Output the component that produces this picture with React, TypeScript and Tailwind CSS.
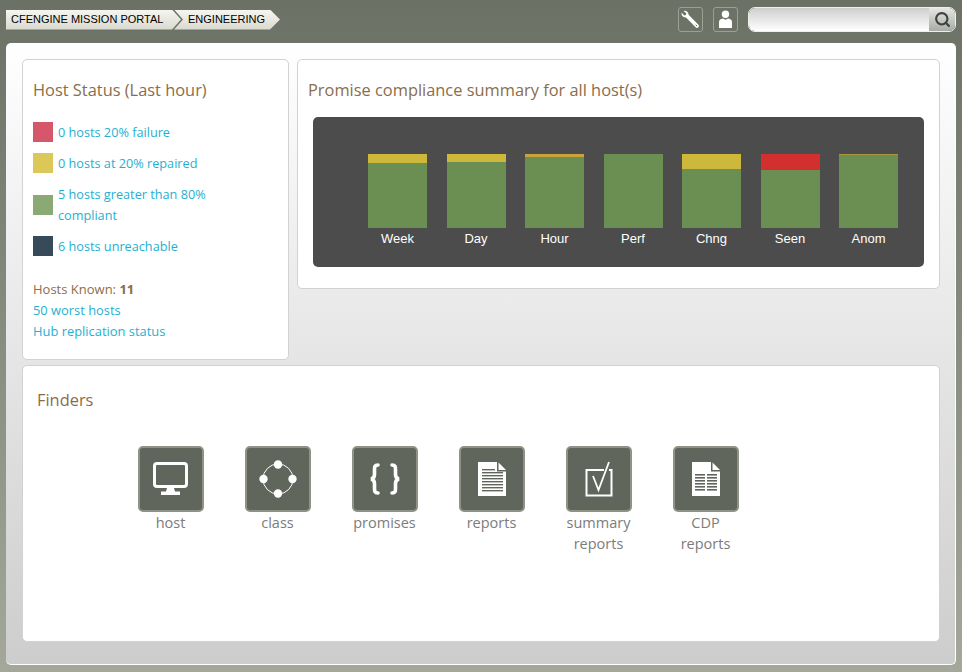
import type { JSX, ReactNode } from 'react'
import { Search } from 'lucide-react'

const LINK = 'text-[#1fb0d0] leading-[21px]'

const LEGEND = [
  { color: 'bg-[#d6566c]', label: '0 hosts 20% failure' },
  { color: 'bg-[#dcc858]', label: '0 hosts at 20% repaired' },
  { color: 'bg-[#8aa974]', label: '5 hosts greater than 80% compliant' },
  { color: 'bg-[#364a5a]', label: '6 hosts unreachable' }
]

// heights are px out of the 74px bar
const BARS = [
  { label: 'Week', top: 'bg-[#cdb83c]', topH: 9 },
  { label: 'Day', top: 'bg-[#cdb83c]', topH: 8 },
  { label: 'Hour', top: 'bg-[#c9a23c]', topH: 3 },
  { label: 'Perf', top: 'bg-[#cdb83c]', topH: 0 },
  { label: 'Chng', top: 'bg-[#cdb83c]', topH: 15 },
  { label: 'Seen', top: 'bg-[#d32f2f]', topH: 16 },
  { label: 'Anom', top: 'bg-[#a8953c]', topH: 1 }
]

function Card({ className, children }: { className: string; children: ReactNode }): JSX.Element {
  return <section className={`rounded-[5px] border border-[#d2d2d2] bg-white ${className}`}>{children}</section>
}

function Breadcrumbs(): JSX.Element {
  return (
    <div className="flex items-center font-['Liberation_Sans',Arial,sans-serif] text-[11px] text-black">
      <span className="z-10 flex h-5 w-[175px] items-center bg-gradient-to-b from-[#f6f6f0] to-[#d9d9d0] pl-[5px] [clip-path:polygon(0_0,166px_0,175px_50%,166px_100%,0_100%)]">
        CFENGINE MISSION PORTAL
      </span>
      <span className="-ml-[7px] flex h-5 w-[106px] items-center bg-gradient-to-b from-[#f6f6f0] to-[#d9d9d0] pl-[14px] [clip-path:polygon(0_0,96px_0,106px_50%,96px_100%,0_100%,9px_50%)]">
        ENGINEERING
      </span>
    </div>
  )
}

function ToolButton({ children }: { children: ReactNode }): JSX.Element {
  return (
    <div className="flex h-[25px] w-[25px] items-center justify-center rounded-[3px] border border-[#9aa093]">
      {children}
    </div>
  )
}

function Header(): JSX.Element {
  return (
    <header className="flex h-[43px] items-center justify-between pl-[6px] pr-[6px] pb-[5px] pt-[1px]">
      <Breadcrumbs />
      <div className="flex items-center">
        <ToolButton>
          <svg width="19" height="19" viewBox="0 0 19 19" fill="white">
            <path d="M2.4 .8 L5.4 3.4 L4.8 5 L3.2 5.4 L.6 2.6 C.1 5.4 2 7.6 5 7.4 L14.6 17.2 C15.6 18.2 16.7 18 17.4 17.2 C18.1 16.4 18.2 15.4 17.2 14.4 L7.6 4.8 C7.6 2 5.4 .2 2.4 .8 Z" />
            <path d="M14.8 14.8 L16 16" stroke="#6b7265" strokeWidth="1" />
          </svg>
        </ToolButton>
        <div className="ml-[10px]">
          <ToolButton>
            <svg width="15" height="19" viewBox="0 0 15 19" fill="white">
              <circle cx="7.5" cy="4.2" r="3.7" />
              <path d="M1 18 V12 C1 9.8 2.8 9 4.8 8.6 L7.5 9.8 L10.2 8.6 C12.2 9 14 9.8 14 12 V18 Z" />
            </svg>
          </ToolButton>
        </div>
        <div className="ml-[10px] flex h-[25px] w-[208px] overflow-hidden rounded-[7px] border border-[#eeeeea]">
          <div className="flex-1 bg-gradient-to-b from-[#cfcfcf] to-white" />
          <div className="flex w-[26px] items-center justify-center bg-gradient-to-b from-[#e6e6e4] to-[#a9aca6]">
            <Search size={17} strokeWidth={3} className="text-[#3c423c]" />
          </div>
        </div>
      </div>
    </header>
  )
}

function HostStatus(): JSX.Element {
  return (
    <Card className="h-[301px] w-[267px] shrink-0 px-[10px] pt-[19px]">
      <h2 className="text-[16.4px] leading-[22px] text-[#8b6d4b]">Host Status (Last hour)</h2>
      <ul className="mt-[21px] flex flex-col gap-[10px]">
        {LEGEND.map((item) => (
          <li key={item.label} className="flex items-center gap-[5px]">
            <span className={`mb-[1px] h-5 w-5 shrink-0 ${item.color}`} />
            <a className={`w-[170px] ${LINK}`}>{item.label}</a>
          </li>
        ))}
      </ul>
      <div className="mt-[22px] flex flex-col text-[12.9px]">
        <span className="text-[13px] leading-[21px] text-[#8b6d4b]">
          Hosts Known: <b>11</b>
        </span>
        <a className={LINK}>50 worst hosts</a>
        <a className={LINK}>Hub replication status</a>
      </div>
    </Card>
  )
}

function Compliance(): JSX.Element {
  return (
    <Card className="h-[230px] flex-1 px-[15px] pt-[19px]">
      <h2 className="-ml-[5px] text-[16.4px] leading-[22px] text-[#8b6d4b]">Promise compliance summary for all host(s)</h2>
      <div className="mt-[16px] flex h-[150px] justify-between rounded-[5px] bg-[#4c4c4c] pl-[55px] pr-[26px] pt-[37px]">
        {BARS.map((bar) => (
          <div key={bar.label} className="flex w-[59px] flex-col items-center">
            <div className="flex h-[74px] w-full flex-col bg-[#6b8f52]">
              <div className={bar.top} style={{ height: bar.topH }} />
            </div>
            <span className="mt-[3px] font-['Liberation_Sans',Arial,sans-serif] text-[13px] leading-[16px] text-white">
              {bar.label}
            </span>
          </div>
        ))}
      </div>
    </Card>
  )
}

function Doc({ lines }: { lines: ReactNode }): JSX.Element {
  return (
    <svg width="28" height="34" viewBox="0 0 28 34">
      <path d="M0 0 H19 V9.5 H28 V34 H0 Z" fill="white" />
      <path d="M20.5 .5 L28 8 H20.5 Z" fill="white" />
      {lines}
    </svg>
  )
}

const docLines = [7, 10, 13, 16, 19, 22, 25, 28].map((y) => (
  <rect key={y} x={4} y={y} width={y < 10 ? 13 : 21} height={1.4} fill="#60665b" />
))

const cdpLines = [12, 15, 18, 21, 24, 27].map((y) => (
  <g key={y} fill="#60665b">
    <rect x={3} y={y} width={10} height={1.6} />
    <rect x={15} y={y} width={10} height={1.6} />
  </g>
))

const FINDERS: { label: ReactNode; icon: JSX.Element }[] = [
  {
    label: 'host',
    icon: (
      <svg width="36" height="34" viewBox="0 0 36 34" fill="none">
        <rect x="1.5" y="1.5" width="32" height="23" rx="2.5" stroke="white" strokeWidth="3" />
        <path d="M14 26 H21 L22 29.5 H27 V33 H8 V29.5 H13 Z" fill="white" />
      </svg>
    )
  },
  {
    label: 'class',
    icon: (
      <svg width="38" height="38" viewBox="0 0 38 38" fill="white">
        <circle cx="19" cy="19" r="15" fill="none" stroke="white" strokeWidth="1" />
        <circle cx="19" cy="4.5" r="4.2" />
        <circle cx="19" cy="33.5" r="4.2" />
        <circle cx="4.5" cy="19" r="4.2" />
        <circle cx="33.5" cy="19" r="4.2" />
      </svg>
    )
  },
  {
    label: 'promises',
    icon: (
      <svg width="32" height="32" viewBox="0 0 32 32" fill="none" stroke="white" strokeWidth="3.6" strokeLinecap="round">
        <path d="M9 2 C5.5 2 5.5 4 5.5 7 V11.5 C5.5 14 4.5 15.5 2 16 C4.5 16.5 5.5 18 5.5 20.5 V25 C5.5 28 5.5 30 9 30" />
        <path d="M23 2 C26.5 2 26.5 4 26.5 7 V11.5 C26.5 14 27.5 15.5 30 16 C27.5 16.5 26.5 18 26.5 20.5 V25 C26.5 28 26.5 30 23 30" />
      </svg>
    )
  },
  { label: 'reports', icon: <Doc lines={docLines} /> },
  {
    label: (
      <>
        summary
        <br />
        reports
      </>
    ),
    icon: (
      <svg width="28" height="36" viewBox="0 0 28 36" fill="none" stroke="white">
        <path d="M19 9 H1.5 V34.5 H26.5 V9 H24" strokeWidth="2" />
        <path d="M8 15 L13.5 29 L24 1" strokeWidth="1.8" />
      </svg>
    )
  },
  {
    label: (
      <>
        CDP
        <br />
        reports
      </>
    ),
    icon: <Doc lines={cdpLines} />
  }
]

function Finders(): JSX.Element {
  return (
    <Card className="mt-[5px] h-[277px] px-[14px] pt-[23px]">
      <h2 className="text-[16.4px] leading-[22px] text-[#8b6d4b]">Finders</h2>
      <div className="mt-[35px] flex pl-[80px]">
        {FINDERS.map((finder, index) => (
          <div key={index} className="flex w-[107px] flex-col items-center">
            <div className="flex h-[66px] w-[66px] items-center justify-center rounded-[5px] border-2 border-[#8e9386] bg-[#60665b]">
              {finder.icon}
            </div>
            <span className="text-center text-[14.5px] leading-[21px] text-[#7c7c7c]">{finder.label}</span>
          </div>
        ))}
      </div>
    </Card>
  )
}

export default function App(): JSX.Element {
  return (
    <div className="h-[672px] w-[962px] overflow-hidden bg-gradient-to-b from-[#6b7265] to-[#a3a89a] font-['Open_Sans',sans-serif] text-[12.7px]">
      <Header />
      <main className="mx-[6px] h-[622px] rounded-[5px] border-b border-r border-white bg-gradient-to-b from-white to-[#cdcdcd] pl-[16px] pr-[15px] pt-[16px]">
        <div className="flex gap-[8px] items-start">
          <HostStatus />
          <Compliance />
        </div>
        <Finders />
      </main>
    </div>
  )
}
